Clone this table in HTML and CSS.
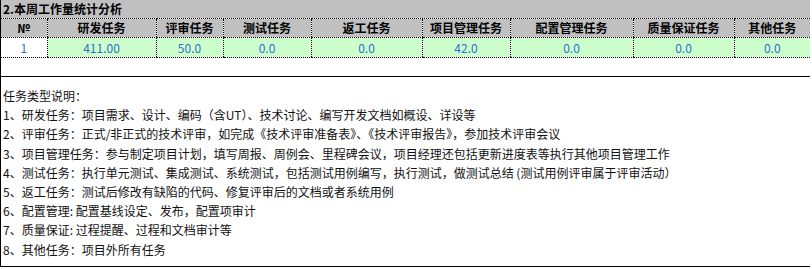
FILE: index.html
```html
<!DOCTYPE html>
<html lang="zh-CN">
<head>
<meta charset="utf-8">
<title>本周工作量统计分析</title>
<link rel="stylesheet" href="styles.css">
</head>
<body>
<div class="sheet">
  <table class="stats">
    <colgroup>
      <col class="c1"><col class="c2"><col class="c3"><col class="c4"><col class="c5"><col class="c6"><col class="c7"><col class="c8"><col class="c9">
    </colgroup>
    <tr class="title-row"><td colspan="9">2.本周工作量统计分析</td></tr>
    <tr class="head-row">
      <th>№</th><th>研发任务</th><th>评审任务</th><th>测试任务</th><th>返工任务</th><th>项目管理任务</th><th>配置管理任务</th><th>质量保证任务</th><th>其他任务</th>
    </tr>
    <tr class="data-row">
      <td class="idx">1</td><td>411.00</td><td>50.0</td><td>0.0</td><td>0.0</td><td>42.0</td><td>0.0</td><td>0.0</td><td>0.0</td>
    </tr>
    <tr class="blank-row"><td colspan="9"></td></tr>
  </table>
  <div class="notes">
    <p>任务类型说明：</p>
    <p>1、研发任务：项目需求、设计、编码（含UT）、技术讨论、编写开发文档如概设、详设等</p>
    <p>2、评审任务：正式/非正式的技术评审，如完成《技术评审准备表》、《技术评审报告》，参加技术评审会议</p>
    <p>3、项目管理任务：参与制定项目计划，填写周报、周例会、里程碑会议，项目经理还包括更新进度表等执行其他项目管理工作</p>
    <p>4、测试任务：执行单元测试、集成测试、系统测试，包括测试用例编写，执行测试，做测试总结 (测试用例评审属于评审活动）</p>
    <p>5、返工任务：测试后修改有缺陷的代码、修复评审后的文档或者系统用例</p>
    <p>6、配置管理: 配置基线设定、发布，配置项审计</p>
    <p>7、质量保证: 过程提醒、过程和文档审计等</p>
    <p>8、其他任务：项目外所有任务</p>
  </div>
</div>
</body>
</html>
```
FILE: styles.css
```css
html, body {
  margin: 0;
  padding: 0;
  background: #ffffff;
}

body {
  font-family: "Noto Sans CJK SC", "Noto Sans", sans-serif;
  font-size: 12px;
  color: #000;
}

.sheet {
  width: 809px;
  border-left: 1px solid #000;
}

.stats {
  width: 809px;
  border-collapse: collapse;
  table-layout: fixed;
}

.c1 { width: 46px; }
.c2 { width: 109px; }
.c3 { width: 67px; }
.c4 { width: 88px; }
.c5 { width: 111px; }
.c6 { width: 88px; }
.c7 { width: 123px; }
.c8 { width: 101px; }
.c9 { width: 76px; }

.stats td, .stats th {
  padding: 0;
  line-height: 18px;
  height: 18px;
  white-space: nowrap;
  overflow: hidden;
}

.title-row td {
  background: #c0c0c0;
  font-weight: bold;
  text-align: left;
  padding-left: 2px;
  border-bottom: 1px dotted #000;
}

.head-row th {
  background: #c0c0c0;
  font-weight: bold;
  text-align: center;
  border-left: 1px dotted #000;
  border-bottom: 1px dotted #000;
}

.head-row th:first-child { border-left: none; }

.data-row td {
  background: #ccffcc;
  color: #2f6fd0;
  text-align: center;
  border-left: 1px dotted #000;
  border-bottom: 1px dotted #000;
  height: 19px;
  line-height: 19px;
}

.data-row td.idx {
  background: #ffffff;
  border-left: none;
}

.blank-row td {
  background: #ffffff;
  border-bottom: 1px solid #000;
}

.notes {
  padding: 9px 0 7px 2px;
  border-bottom: 1px solid #000;
}

.notes p {
  margin: 0;
  line-height: 19.2px;
  color: #111;
  white-space: nowrap;
}
```
